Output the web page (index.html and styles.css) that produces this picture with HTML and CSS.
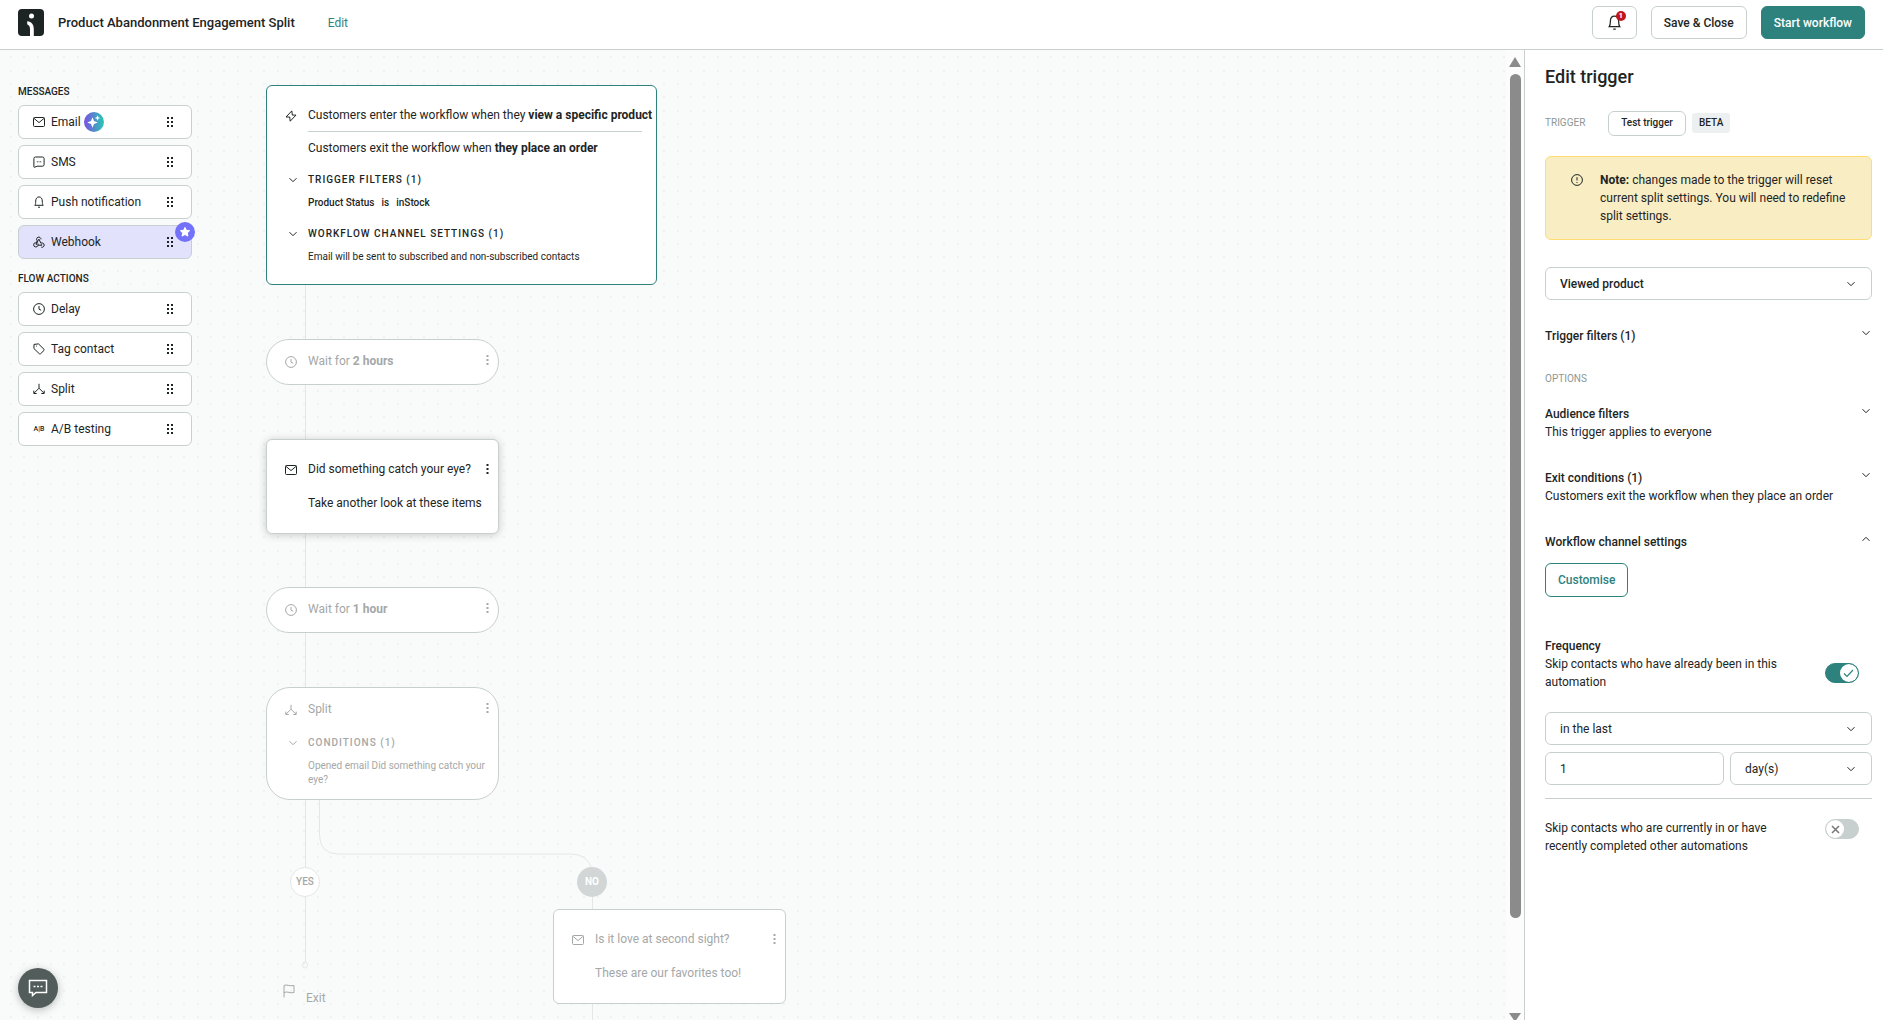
FILE: index.html
```html
<!DOCTYPE html>
<html lang="en">
<head>
<meta charset="utf-8">
<meta name="viewport" content="width=device-width, initial-scale=1">
<title>Product Abandonment Engagement Split</title>
<link rel="stylesheet" href="styles.css">
</head>
<body>
<svg class="defs" aria-hidden="true">
  <symbol id="mail" viewBox="0 0 12 12"><rect x=".5" y="1.5" width="11" height="9" rx="1"/><path d="M.8 2.2 6 6.6l5.200-4.400"/></symbol>
  <symbol id="sms" viewBox="0 0 12 12"><path d="M2.500 1h7a1.600 1.600 0 0 1 1.600 1.600v6a1.600 1.600 0 0 1-1.600 1.600H4L1.500 11.300c-.4.100-.6-.1-.6-.5V2.600A1.600 1.600 0 0 1 2.500 1Z"/><path d="M3.800 5.800h1M5.600 5.800h.8M7.200 5.800h1"/></symbol>
  <symbol id="bell" viewBox="0 0 12 12"><path d="M1.800 9.300h8.400C9.400 8.300 9.300 7 9.300 5 9.300 2.700 8 .9 6 .9S2.700 2.700 2.700 5c0 2-.1 3.300-.9 4.300ZM5 11.200h2"/></symbol>
  <symbol id="hook" viewBox="0 0 12 12"><path d="M4.200 4.800A2.200 2.200 0 1 1 8 3.300M4.200 4.800 2.900 7.700M5.900 3l2 4.200a2.200 2.200 0 1 1 .4 4M2.700 6.600A2.200 2.200 0 1 0 5 9.200h3.800M5.600 3.300 3.100 9M5 7.600v1.600M7.800 8.900h1.400"/></symbol>
  <symbol id="clock" viewBox="0 0 12 12"><circle cx="6" cy="6" r="5.400"/><path d="M6 3v3.200l2.200 1"/></symbol>
  <symbol id="tag" viewBox="0 0 12 12"><path d="M1 1.400 5.500.9l5.500 5.400a.8.8 0 0 1 0 1.100l-3.500 3.400a.8.8 0 0 1-1.100 0L.9 5.500Z"/><path d="M3.100 3.100h.7"/></symbol>
  <symbol id="split" viewBox="0 0 12 12"><path d="M6 .8v4.400L1.200 10M6 5.200l4.800 4.800M.8 7.600v2.900h2.900M11.200 7.600v2.900H8.300"/></symbol>
  <symbol id="bolt" viewBox="0 0 12 12"><path d="M6.800.9 1 7h3.700l.5 4.200L11 5.100H7.300Z"/></symbol>
  <symbol id="chev" viewBox="0 0 12 12"><path d="m2.500 4.200 3.500 3.500 3.500-3.500"/></symbol>
  <symbol id="flag" viewBox="0 0 12 14"><path d="M1 13.500v-12c3-1.600 5 1.200 10 0v7c-4 1.200-6-1.600-10 0"/></symbol>
  <symbol id="dots" viewBox="0 0 3 12"><path class="solid" d="M.5 1h2v2h-2zM.5 5h2v2h-2zM.5 9h2v2h-2z"/></symbol>
  <symbol id="grip" viewBox="0 0 8 12"><path class="solid" d="M1 1h2v2H1zM5 1h2v2H5zM1 5h2v2H1zM5 5h2v2H5zM1 9h2v2H1zM5 9h2v2H5z"/></symbol>
</svg>

<header class="topbar">
  <svg class="logo" viewBox="0 0 26 27" role="img" aria-label="Logo"><rect width="26" height="27" rx="4"/><circle cx="13.500" cy="7" r="2.500"/><path d="M9.200 12.200c4.600.4 6.600 3.400 6.600 8V27h-3.800v-6.500c0-2.600-.6-4.200-2.800-5.300Z"/></svg>
  <h1 class="name">Product Abandonment Engagement Split</h1>
  <a class="edit" href="#edit">Edit</a>
  <div class="actions">
    <button class="btn btn-bell" type="button" aria-label="Notifications"><svg class="icon-lg"><use href="#bell"/></svg><span class="count">1</span></button>
    <button class="btn" type="button">Save &amp; Close</button>
    <button class="btn btn-main" type="button">Start workflow</button>
  </div>
</header>

<div class="shell">
  <main class="workspace">
    <nav class="palette" aria-label="Blocks">
      <h2 class="group">MESSAGES</h2>
      <button class="block" type="button"><svg class="icon"><use href="#mail"/></svg>Email<svg class="spark" viewBox="0 0 20 20"><defs><linearGradient id="sg"><stop offset="0" stop-color="#7b50e2"/><stop offset="1" stop-color="#28c8b4"/></linearGradient></defs><circle cx="10" cy="10" r="10" fill="url(#sg)"/><path fill="#fff" d="M8.500 5.200 10 9l3.800 1.500L10 12l-1.500 3.800L7 12l-3.800-1.500L7 9ZM13.500 3.200l.8 2 2 .8-2 .8-.8 2-.8-2-2-.8 2-.8Z"/></svg><svg class="grip"><use href="#grip"/></svg></button>
      <button class="block" type="button"><svg class="icon"><use href="#sms"/></svg>SMS<svg class="grip"><use href="#grip"/></svg></button>
      <button class="block" type="button"><svg class="icon"><use href="#bell"/></svg>Push notification<svg class="grip"><use href="#grip"/></svg></button>
      <button class="block block-new" type="button"><svg class="icon"><use href="#hook"/></svg>Webhook<svg class="grip"><use href="#grip"/></svg><svg class="star" viewBox="0 0 20 20"><circle cx="10" cy="10" r="10" fill="#7472fa"/><path fill="#fff" stroke="#fff" stroke-linejoin="round" d="m10 5.400 1.400 2.900 3.200.4-2.300 2.200.6 3.200-2.900-1.600-2.900 1.600.6-3.200-2.300-2.200 3.200-.4Z"/></svg></button>
      <h2 class="group">FLOW ACTIONS</h2>
      <button class="block" type="button"><svg class="icon"><use href="#clock"/></svg>Delay<svg class="grip"><use href="#grip"/></svg></button>
      <button class="block" type="button"><svg class="icon"><use href="#tag"/></svg>Tag contact<svg class="grip"><use href="#grip"/></svg></button>
      <button class="block" type="button"><svg class="icon"><use href="#split"/></svg>Split<svg class="grip"><use href="#grip"/></svg></button>
      <button class="block" type="button"><span class="ab">A|B</span>A/B testing<svg class="grip"><use href="#grip"/></svg></button>
    </nav>

    <svg class="wires" aria-hidden="true">
      <path d="M305.500 230v682M319.500 740v45q0 19 19 19H571q16 0 21 15M592.500 840v140"/>
      <ellipse cx="305" cy="915" rx="2.500" ry="3"/>
    </svg>

    <section class="node trigger">
      <svg class="icon lead"><use href="#bolt"/></svg>
      <p class="line">Customers enter the workflow when they <b>view a specific product</b></p>
      <p class="line exit-line">Customers exit the workflow when <b>they place an order</b></p>
      <svg class="icon fold"><use href="#chev"/></svg>
      <h3 class="caps">TRIGGER FILTERS (1)</h3>
      <p class="small filter"><span>Product Status</span><span>is</span><span>inStock</span></p>
      <svg class="icon fold"><use href="#chev"/></svg>
      <h3 class="caps">WORKFLOW CHANNEL SETTINGS (1)</h3>
      <p class="small">Email will be sent to subscribed and non-subscribed contacts</p>
    </section>

    <section class="node wait wait-a muted">
      <svg class="icon lead"><use href="#clock"/></svg>
      <p class="line">Wait for <b>2 hours</b></p>
      <button class="more" type="button" aria-label="More"><svg><use href="#dots"/></svg></button>
    </section>

    <section class="node mail mail-a">
      <svg class="icon lead"><use href="#mail"/></svg>
      <p class="line">Did something catch your eye?</p>
      <p class="line second">Take another look at these items</p>
      <button class="more" type="button" aria-label="More"><svg><use href="#dots"/></svg></button>
    </section>

    <section class="node wait wait-b muted">
      <svg class="icon lead"><use href="#clock"/></svg>
      <p class="line">Wait for <b>1 hour</b></p>
      <button class="more" type="button" aria-label="More"><svg><use href="#dots"/></svg></button>
    </section>

    <section class="node split muted">
      <svg class="icon lead"><use href="#split"/></svg>
      <p class="line">Split</p>
      <svg class="icon fold"><use href="#chev"/></svg>
      <h3 class="caps">CONDITIONS (1)</h3>
      <p class="small">Opened email Did something catch your eye?</p>
      <button class="more" type="button" aria-label="More"><svg><use href="#dots"/></svg></button>
    </section>

    <span class="branch yes">YES</span>
    <span class="branch no">NO</span>

    <section class="node mail mail-b muted">
      <svg class="icon lead"><use href="#mail"/></svg>
      <p class="line">Is it love at second sight?</p>
      <p class="line second">These are our favorites too!</p>
      <button class="more" type="button" aria-label="More"><svg><use href="#dots"/></svg></button>
    </section>

    <div class="end"><svg class="flag"><use href="#flag"/></svg><span>Exit</span></div>

    <button class="chat" type="button" aria-label="Chat"><svg viewBox="0 0 20 18"><path d="M1.500 1.500h17v12H8l-3.500 3v-3h-3Z"/><path d="M5.500 7.500h2M9 7.500h2M12.500 7.500h2"/></svg></button>
  </main>

  <div class="scroll" aria-hidden="true"><span class="arrow up"></span><span class="thumb"></span><span class="arrow down"></span></div>

  <aside class="panel">
    <h2 class="title">Edit trigger</h2>
    <div class="test-row"><span class="hint">TRIGGER</span><button class="btn-test" type="button">Test trigger</button><span class="beta">BETA</span></div>
    <div class="note">
      <svg class="icon" viewBox="0 0 12 12"><circle cx="6" cy="6" r="5.400"/><path d="M6 3.200v3.300M6 8v1"/></svg>
      <p><b>Note:</b> changes made to the trigger will reset current split settings. You will need to redefine split settings.</p>
    </div>
    <select class="field strong" aria-label="Trigger"><option>Viewed product</option></select>
    <section class="option first"><h3>Trigger filters (1)</h3><svg class="icon"><use href="#chev"/></svg></section>
    <p class="hint options">OPTIONS</p>
    <section class="option"><h3>Audience filters</h3><svg class="icon"><use href="#chev"/></svg><p>This trigger applies to everyone</p></section>
    <section class="option"><h3>Exit conditions (1)</h3><svg class="icon"><use href="#chev"/></svg><p>Customers exit the workflow when they place an order</p></section>
    <section class="option channel"><h3>Workflow channel settings</h3><svg class="icon open"><use href="#chev"/></svg></section>
    <button class="customise" type="button">Customise</button>
    <h3 class="freq">Frequency</h3>
    <label class="skip"><span>Skip contacts who have already been in this automation</span><input type="checkbox" checked></label>
    <div class="fields">
      <select class="field wide" aria-label="Period"><option>in the last</option></select>
      <input class="field" type="text" value="1" aria-label="Amount">
      <select class="field" aria-label="Unit"><option>day(s)</option></select>
    </div>
    <hr class="rule">
    <label class="skip other"><span>Skip contacts who are currently in or have recently completed other automations</span><input type="checkbox"></label>
  </aside>
</div>
</body>
</html>
```
FILE: styles.css
```css
:root {
  --ink: #1d2524;
  --teal: #2e827e;
  --line: #c8d0cf;
  --wire: #e3e7e6;
}

* { box-sizing: border-box; }

body {
  margin: 0;
  height: 100vh;
  display: flex;
  flex-direction: column;
  overflow: hidden;
  color: var(--ink);
  background: #fff;
  font: 12px/18px Roboto, "Liberation Sans", sans-serif;
}

h1, h2, h3, p { margin: 0; font-size: inherit; font-weight: 500; }
p { font-weight: 400; }
b { font-weight: 700; }
button, input, select { font: inherit; color: inherit; }

.defs { position: absolute; width: 0; height: 0; }

svg { fill: none; stroke: currentColor; stroke-width: 1; flex: none; }
.solid { fill: currentColor; stroke: none; }
.icon { width: 12px; height: 12px; }

/* Top bar */
.topbar {
  flex: none;
  height: 50px;
  padding: 0 18px 4px;
  display: flex;
  align-items: center;
  border-bottom: 1px solid var(--line);
}
.logo { width: 26px; height: 27px; fill: #fff; stroke: none; }
.logo rect { fill: var(--ink); }
.name { margin-left: 14px; font-size: 13px; }
.edit { margin-left: 33px; color: var(--teal); text-decoration: none; }
.actions { margin-left: auto; display: flex; gap: 14px; }
.btn {
  height: 33px;
  padding: 0 12px;
  font-weight: 500;
  background: #fff;
  border: 1px solid var(--line);
  border-radius: 6px;
}
.btn-bell { position: relative; width: 45px; padding: 0; display: grid; place-items: center; }
.icon-lg { width: 15px; height: 15px; stroke-width: 1; }
.count {
  position: absolute;
  top: 4px;
  right: 10px;
  width: 10px;
  height: 10px;
  border-radius: 50%;
  background: #c3141c;
  color: #fff;
  font: 700 8px/10px Roboto, sans-serif;
}
.btn-main { background: var(--teal); border-color: var(--teal); color: #fff; }

/* Workspace */
.shell { flex: 1; min-height: 0; display: flex; }
.workspace {
  position: relative;
  flex: 1;
  min-width: 0;
  overflow: hidden;
  background: #f9fbfa url("data:image/svg+xml,%3Csvg xmlns='http://www.w3.org/2000/svg' width='40' height='40' fill='%23eff2f1'%3E%3Cpath d='M10 6h2v2h-2zM23 6h2v2h-2zM37 6h2v2h-2zM10 20h2v2h-2zM23 20h2v2h-2zM37 20h2v2h-2zM10 33h2v2h-2zM23 33h2v2h-2zM37 33h2v2h-2z'/%3E%3C/svg%3E");
}
.palette {
  width: 192px;
  padding: 33px 0 0 18px;
  display: flex;
  flex-direction: column;
  gap: 6px;
}
.group { padding-top: 2px; font-size: 10px; line-height: 14px; }
.block + .group { margin: 5px 0 0; }
.block {
  position: relative;
  height: 34px;
  padding: 0 17px 0 14px;
  display: flex;
  align-items: center;
  gap: 6px;
  background: #fff;
  border: 1px solid var(--line);
  border-radius: 6px;
}
.block-new { background: #e3e2fd; }
.block .spark { width: 20px; height: 20px; margin-left: -3px; stroke: none; }
.grip { width: 8px; height: 12px; margin-left: auto; }
.star { position: absolute; top: -4px; right: -4px; width: 20px; height: 20px; stroke: none; }
.ab { width: 12px; font-size: 7px; font-weight: 500; white-space: nowrap; }

/* Diagram */
.wires { position: absolute; inset: 0; width: 100%; height: 100%; stroke: var(--wire); }
.node {
  position: absolute;
  left: 266px;
  width: 233px;
  display: grid;
  grid-template-columns: 23px minmax(0, 1fr);
  align-content: start;
  padding: 0 12px 0 18px;
  background: #fff;
  border: 1px solid var(--line);
  border-radius: 6px;
}
.muted { color: #a5a8a8; }
.line, .second, .caps, .small { grid-column: 2; }
.line, .caps { line-height: 20px; }
.lead { margin-top: 5px; }
.fold { grid-column: 1; margin: 4px 0 0 2px; }
.caps { font-size: 10px; letter-spacing: 1px; }
.small { font-size: 10px; line-height: 14px; }

.trigger { top: 35px; width: 391px; min-height: 200px; padding: 19px 14px 0 18px; border-color: var(--teal); }
.trigger .line { white-space: nowrap; }
.exit-line { margin: 6px 0 12px; padding-top: 6px; border-top: 1px solid var(--line); }
.trigger .small { margin: 6px 0 14px; }
.filter { display: flex; gap: 7px; font-weight: 500; }
.wait { height: 46px; padding-top: 11px; border-radius: 23px; }
.wait-a { top: 289px; }
.wait-b { top: 537px; }
.mail { height: 95px; padding-top: 19px; }
.second { margin-top: 14px; }
.mail-a { top: 389px; box-shadow: 0 1px 8px rgba(0, 0, 0, .2); }
.mail-b { top: 859px; left: 553px; }
.split { top: 637px; min-height: 113px; padding-top: 11px; border-radius: 24px; }
.split .caps { margin-top: 14px; }
.split .fold { margin-top: 18px; }
.split .small { margin-top: 6px; }
.more {
  position: absolute;
  top: 14px;
  right: 8px;
  width: 5px;
  height: 12px;
  padding: 0;
  display: grid;
  place-items: center;
  background: none;
  border: 0;
}
.more svg { width: 3px; height: 12px; }
.mail .more { top: 23px; }
.branch {
  position: absolute;
  top: 817px;
  width: 30px;
  height: 30px;
  border-radius: 50%;
  font-size: 10px;
  font-weight: 500;
  line-height: 28px;
  text-align: center;
}
.yes { left: 290px; color: #a5a8a8; background: #fff; border: 1px solid var(--wire); }
.no { left: 577px; color: #fff; background: #d2d6d6; font-weight: 700; line-height: 30px; }
.end { position: absolute; left: 283px; top: 934px; display: flex; gap: 11px; color: #a5a8a8; line-height: 28px; }
.flag { width: 12px; height: 14px; }

.chat {
  position: absolute;
  left: 18px;
  bottom: 12px;
  width: 40px;
  height: 40px;
  padding: 0;
  display: grid;
  place-items: center;
  color: #fff;
  background: #525c5a;
  border: 0;
  border-radius: 50%;
  box-shadow: 0 2px 8px rgba(0, 0, 0, .25);
}
.chat svg { width: 20px; height: 18px; stroke-width: 1.5; }

/* Scroll bar */
.scroll {
  flex: none;
  width: 18px;
  padding: 7px 2px 0;
  display: flex;
  flex-direction: column;
  align-items: center;
  background: #fcfcfc;
  overflow: hidden;
}
.arrow { flex: none; width: 12px; height: 10px; background: #8b8b8b; clip-path: polygon(50% 0, 100% 100%, 0 100%); }
.thumb { width: 11px; flex: 1; margin: 7px 0 95px; background: #8b8b8b; border-radius: 6px; }
.down { clip-path: polygon(0 0, 100% 0, 60% 100%, 40% 100%); height: 7px; }

/* Side panel */
.panel {
  flex: none;
  width: 359px;
  padding: 15px 11px 16px 20px;
  border-left: 1px solid var(--line);
  overflow: hidden;
}
.title { font-size: 18px; line-height: 24px; }
.test-row { display: flex; align-items: center; margin-top: 21px; height: 26px; }
.hint { font-size: 10px; color: #8c9796; }
.btn-test {
  width: 78px;
  height: 25px;
  margin: 0 6px 0 0;
  padding: 0;
  font-size: 10px;
  font-weight: 500;
  background: #fff;
  border: 1px solid var(--line);
  border-radius: 6px;
}
.test-row .hint { width: 63px; }
.beta { height: 20px; padding: 0 7px; font-size: 10px; line-height: 20px; font-weight: 500; background: #edf0f1; border-radius: 3px; }
.note {
  display: flex;
  gap: 17px;
  margin: 20px 0 27px;
  padding: 14px 18px 14px 25px;
  background: #f9edc4;
  border: 1px solid #ffdc73;
  border-radius: 6px;
}
.note .icon { margin-top: 3px; }
.field {
  display: block;
  width: 100%;
  height: 33px;
  min-width: 0;
  padding: 0 14px;
  appearance: none;
  background: #fff;
  border: 1px solid var(--line);
  border-radius: 6px;
}
select.field {
  background: #fff url("data:image/svg+xml,%3Csvg xmlns='http://www.w3.org/2000/svg' width='12' height='12' fill='none' stroke='%231d2524'%3E%3Cpath d='m2.500 4.200 3.500 3.500 3.500-3.500'/%3E%3C/svg%3E") no-repeat right 14px center;
}
.strong { font-weight: 500; }
.option { display: grid; grid-template-columns: 1fr 12px; column-gap: 8px; margin-bottom: 28px; }
.option p { grid-column: 1 / -1; }
.first { margin: 27px 0 25px; }
.open { rotate: 180deg; }
.options { margin-bottom: 17px; }
.channel { margin-bottom: 12px; }
.customise {
  height: 34px;
  padding: 0 12px;
  color: var(--teal);
  font-weight: 500;
  background: #fff;
  border: 1px solid var(--teal);
  border-radius: 6px;
}
.freq { margin-top: 40px; }
.skip { display: flex; align-items: center; justify-content: space-between; padding-right: 13px; }
.skip span { width: 240px; }
.skip input {
  appearance: none;
  width: 34px;
  height: 20px;
  margin: 0;
  border: 1px solid var(--line);
  border-radius: 10px;
  background: var(--line) url("data:image/svg+xml,%3Csvg xmlns='http://www.w3.org/2000/svg' width='18' height='18' fill='none'%3E%3Ccircle cx='9' cy='9' r='9' fill='%23fff'/%3E%3Cpath stroke='%23777' stroke-width='1.500' d='m6 6 7 7m0-7-7 7'/%3E%3C/svg%3E") no-repeat left center;
}
.skip input:checked {
  border-color: var(--teal);
  background: var(--teal) url("data:image/svg+xml,%3Csvg xmlns='http://www.w3.org/2000/svg' width='18' height='18' fill='none'%3E%3Ccircle cx='9' cy='9' r='9' fill='%23fff'/%3E%3Cpath stroke='%232e827e' stroke-width='1.200' d='m4 9.500 3 3 6-6.500'/%3E%3C/svg%3E") no-repeat right center;
}
.fields { display: grid; grid-template-columns: 179px 1fr; gap: 7px 6px; margin-top: 21px; }
.wide { grid-column: 1 / -1; }
.rule { margin: 13px 0 20px; border: 0; border-top: 1px solid var(--line); }
.other { align-items: flex-start; }
```
